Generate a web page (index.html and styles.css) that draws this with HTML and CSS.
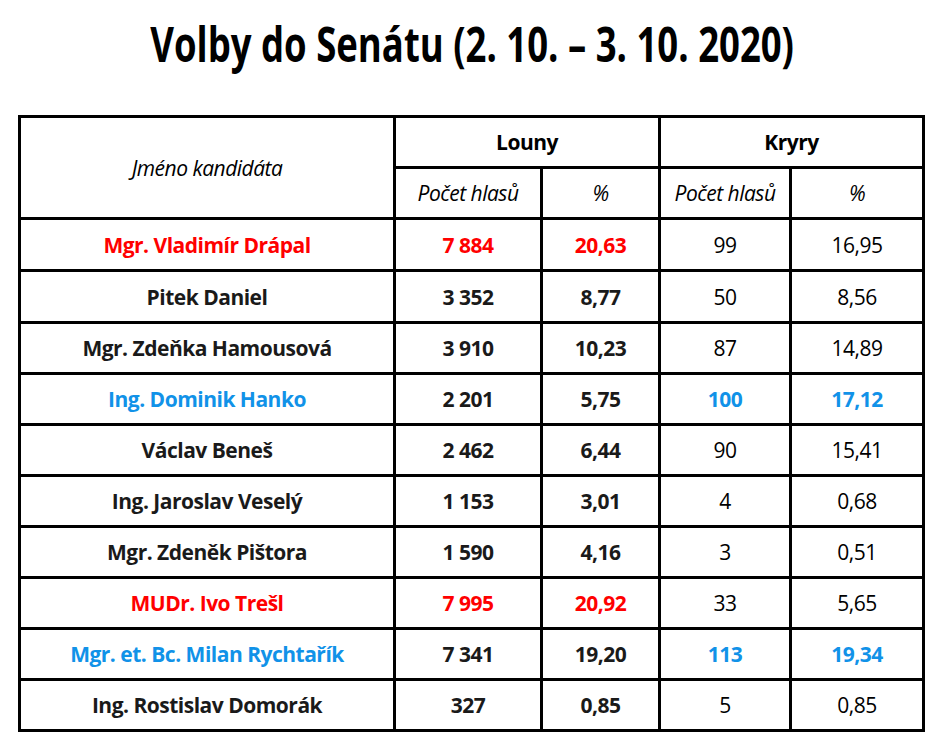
FILE: index.html
```html
<!DOCTYPE html>
<html lang="cs">
<head>
<meta charset="utf-8">
<title>Volby do Senátu</title>
<link rel="stylesheet" href="styles.css">
</head>
<body>
<header class="title-wrap"><h1 class="title">Volby do Senátu (2. 10. – 3. 10. 2020)</h1></header>
<div class="results">
  <div class="cell head-name"><span class="it">Jméno kandidáta</span></div>
  <div class="cell head-town">Louny</div>
  <div class="cell head-town">Kryry</div>
  <div class="cell it">Počet hlasů</div>
  <div class="cell it">%</div>
  <div class="cell it">Počet hlasů</div>
  <div class="cell it">%</div>

  <div class="cell b red">Mgr. Vladimír Drápal</div>
  <div class="cell b red">7 884</div>
  <div class="cell b red">20,63</div>
  <div class="cell">99</div>
  <div class="cell">16,95</div>

  <div class="cell b">Pitek Daniel</div>
  <div class="cell b">3 352</div>
  <div class="cell b">8,77</div>
  <div class="cell">50</div>
  <div class="cell">8,56</div>

  <div class="cell b">Mgr. Zdeňka Hamousová</div>
  <div class="cell b">3 910</div>
  <div class="cell b">10,23</div>
  <div class="cell">87</div>
  <div class="cell">14,89</div>

  <div class="cell b blue">Ing. Dominik Hanko</div>
  <div class="cell b">2 201</div>
  <div class="cell b">5,75</div>
  <div class="cell b blue">100</div>
  <div class="cell b blue">17,12</div>

  <div class="cell b">Václav Beneš</div>
  <div class="cell b">2 462</div>
  <div class="cell b">6,44</div>
  <div class="cell">90</div>
  <div class="cell">15,41</div>

  <div class="cell b">Ing. Jaroslav Veselý</div>
  <div class="cell b">1 153</div>
  <div class="cell b">3,01</div>
  <div class="cell">4</div>
  <div class="cell">0,68</div>

  <div class="cell b">Mgr. Zdeněk Pištora</div>
  <div class="cell b">1 590</div>
  <div class="cell b">4,16</div>
  <div class="cell">3</div>
  <div class="cell">0,51</div>

  <div class="cell b red">MUDr. Ivo Trešl</div>
  <div class="cell b red">7 995</div>
  <div class="cell b red">20,92</div>
  <div class="cell">33</div>
  <div class="cell">5,65</div>

  <div class="cell b blue">Mgr. et. Bc. Milan Rychtařík</div>
  <div class="cell b">7 341</div>
  <div class="cell b">19,20</div>
  <div class="cell b blue">113</div>
  <div class="cell b blue">19,34</div>

  <div class="cell b">Ing. Rostislav Domorák</div>
  <div class="cell b">327</div>
  <div class="cell b">0,85</div>
  <div class="cell">5</div>
  <div class="cell">0,85</div>
</div>
</body>
</html>
```
FILE: styles.css
```css
html, body {
  margin: 0;
  padding: 0;
  background: #fff;
}
body {
  font-family: "Open Sans", "Noto Sans", sans-serif;
  color: #000;
}
.title-wrap {
  height: 115px;
  display: flex;
  justify-content: center;
  align-items: flex-start;
}
.title {
  margin: 0;
  padding-top: 13px;
  font-size: 49px;
  font-weight: 700;
  line-height: 60px;
  white-space: nowrap;
  transform: scaleX(0.745);
}
.results {
  margin-left: 18px;
  width: 907px;
  box-sizing: border-box;
  display: grid;
  grid-template-columns: 375px 147px 118px 131px 133px;
  grid-template-rows: 51px 51px 52px 52px repeat(8, 51px);
  border-right: 3px solid #000;
  border-bottom: 3px solid #000;
}
.cell {
  box-sizing: border-box;
  border-top: 3px solid #000;
  border-left: 3px solid #000;
  display: flex;
  align-items: center;
  justify-content: center;
  font-size: 21px;
  letter-spacing: -0.5px;
  color: #000;
  white-space: nowrap;
}
.head-name {
  grid-row: span 2;
}
.head-town {
  grid-column: span 2;
  font-weight: 700;
}
.it {
  font-style: italic;
}
.b {
  font-weight: 700;
  color: #1a1a1a;
}
.red {
  color: #ff0000;
}
.blue {
  color: #1192e8;
}
```
